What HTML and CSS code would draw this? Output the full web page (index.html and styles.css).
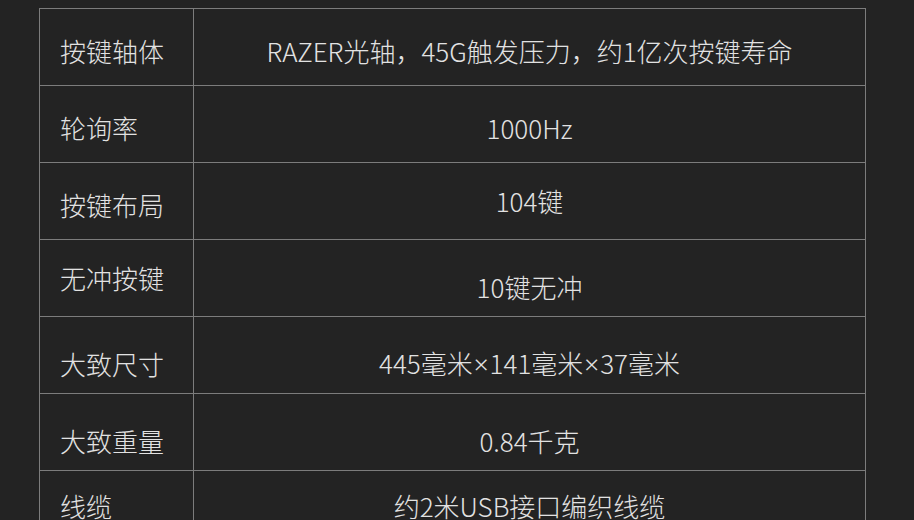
FILE: index.html
```html
<!DOCTYPE html>
<html lang="zh-CN">
<head>
    <meta charset="UTF-8">
    <meta name="viewport" content="width=device-width, initial-scale=1.0">
    <title>规格参数</title>
    <link rel="stylesheet" href="styles.css">
</head>
<body>
    <main class="specs">
        <table class="spec-table">
            <tr>
                <td class="spec-name">按键轴体</td>
                <td class="spec-value">RAZER光轴，45G触发压力，约1亿次按键寿命</td>
            </tr>
            <tr>
                <td class="spec-name">轮询率</td>
                <td class="spec-value">1000Hz</td>
            </tr>
            <tr>
                <td class="spec-name">按键布局</td>
                <td class="spec-value mid">104键</td>
            </tr>
            <tr>
                <td class="spec-name mid">无冲按键</td>
                <td class="spec-value low">10键无冲</td>
            </tr>
            <tr>
                <td class="spec-name low">大致尺寸</td>
                <td class="spec-value low">445毫米<span class="times">×</span>141毫米<span class="times">×</span>37毫米</td>
            </tr>
            <tr>
                <td class="spec-name low">大致重量</td>
                <td class="spec-value low">0.84千克</td>
            </tr>
            <tr>
                <td class="spec-name top">线缆</td>
                <td class="spec-value top">约2米USB接口编织线缆</td>
            </tr>
        </table>
    </main>
</body>
</html>
```

FILE: styles.css
```css
body {
    margin: 0;
    padding: 8px 0 0 39px;
    background-color: #232323;
    color: #e2e2e2;
    font-family: "Noto Sans CJK SC", "Noto Sans", sans-serif;
    font-weight: 300;
    overflow: hidden;
}
.specs {
    width: 827px;
}
.spec-table {
    width: 100%;
    border-collapse: collapse;
    font-size: 26px;
}
.spec-table td {
    border: 1px solid #7c7c7c;
    height: 77px;
    box-sizing: border-box;
    padding: 8px 0 0;
    line-height: 1.2;
    vertical-align: middle;
}
.spec-table td.mid {
    padding-top: 0;
}
.spec-table td.low {
    padding-top: 18px;
}
.spec-table td.top {
    padding-top: 0;
    padding-bottom: 6px;
}
.spec-name {
    width: 154px;
    padding-left: 20px !important;
    text-align: left;
}
.spec-value {
    text-align: center;
}
.times {
    font-family: "Noto Sans", sans-serif;
    padding: 0 1px;
}
```
